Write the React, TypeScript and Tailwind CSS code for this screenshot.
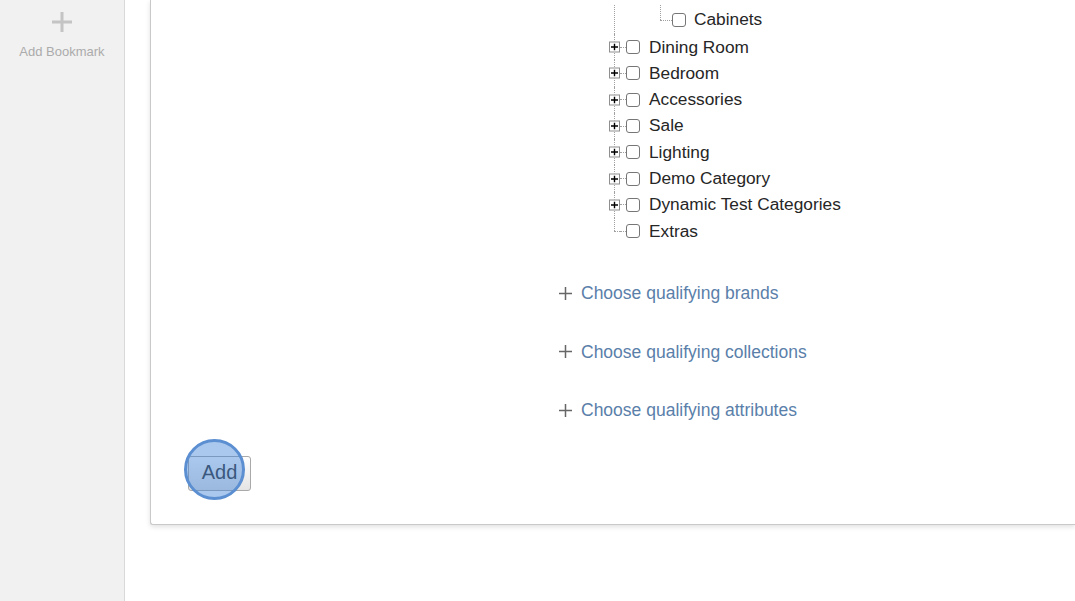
import React from 'react';

type Row = { label: string; expandable: boolean; last?: boolean };

const rows: Row[] = [
  { label: 'Dining Room', expandable: true },
  { label: 'Bedroom', expandable: true },
  { label: 'Accessories', expandable: true },
  { label: 'Sale', expandable: true },
  { label: 'Lighting', expandable: true },
  { label: 'Demo Category', expandable: true },
  { label: 'Dynamic Test Categories', expandable: true },
  { label: 'Extras', expandable: false, last: true },
];

const links = [
  'Choose qualifying brands',
  'Choose qualifying collections',
  'Choose qualifying attributes',
];

function Checkbox() {
  return <span className="w-[14px] h-[14px] shrink-0 rounded-[3px] border border-[#767676] bg-white" />;
}

function Expander() {
  return (
    <span className="absolute left-0 top-1/2 -translate-y-1/2 w-[11px] h-[11px] border border-[#8f8f8f] bg-white flex items-center justify-center">
      <svg width="7" height="7" viewBox="0 0 7 7">
        <path d="M0 3.5h7M3.5 0v7" stroke="#000" strokeWidth="1.4" />
      </svg>
    </span>
  );
}

function TreeRow({ row }: { row: Row }) {
  return (
    <div className="flex items-center h-[26.3px]">
      <div className="relative w-[11px] h-full shrink-0">
        <span
          className={`absolute left-[5px] top-0 border-l border-dotted border-[#a0a0a0] ${
            row.last ? 'h-1/2' : 'h-full'
          }`}
        />
        {row.expandable ? (
          <Expander />
        ) : (
          <span className="absolute left-[5px] right-0 top-1/2 border-t border-dotted border-[#a0a0a0]" />
        )}
      </div>
      <span className="w-[6px] shrink-0 border-t border-dotted border-[#a0a0a0]" />
      <Checkbox />
      <span className="ml-[9px] text-[17.3px] text-[#262626] leading-none">{row.label}</span>
    </div>
  );
}

export default function App() {
  return (
    <div
      className="flex h-screen w-full overflow-hidden bg-white"
      style={{ fontFamily: '"Liberation Sans", Arial, sans-serif' }}
    >
      {/* Sidebar */}
      <aside className="w-[125px] shrink-0 bg-[#f1f1f1] border-r border-[#d9d9d9] flex flex-col items-center pt-[11px]">
        <svg width="22" height="22" viewBox="0 0 22 22">
          <path d="M11 1v20M1 11h20" stroke="#c4c4c4" strokeWidth="3" />
        </svg>
        <span className="mt-[9px] text-[13px] text-[#ababab]">Add Bookmark</span>
      </aside>

      {/* Main */}
      <main className="flex-1 pl-[25px] overflow-hidden">
        <div className="h-[525px] bg-white border-l border-b border-[#c9c9c9] rounded-bl-[3px] shadow-[0_2px_5px_rgba(0,0,0,0.12)]">
          {/* Category tree */}
          <div className="pl-[458px] pt-[5px]">
            <div className="flex items-center h-[29px]">
              <div className="relative w-[11px] h-full shrink-0">
                <span className="absolute left-[5px] top-0 h-full border-l border-dotted border-[#a0a0a0]" />
              </div>
              <span className="w-[35px] shrink-0" />
              <div className="relative w-[17px] h-full shrink-0">
                <span className="absolute left-[5px] top-0 h-1/2 border-l border-dotted border-[#a0a0a0]" />
                <span className="absolute left-[5px] right-0 top-1/2 border-t border-dotted border-[#a0a0a0]" />
              </div>
              <Checkbox />
              <span className="ml-[8px] text-[17.3px] text-[#262626] leading-none">Cabinets</span>
            </div>
            {rows.map((row) => (
              <TreeRow key={row.label} row={row} />
            ))}
          </div>

          {/* Qualifying links */}
          <div className="pl-[408px] mt-[37px] flex flex-col gap-[34.5px]">
            {links.map((link) => (
              <div key={link} className="flex items-center h-[24px]">
                <svg width="13" height="13" viewBox="0 0 13 13" className="shrink-0">
                  <path d="M6.5 0v13M0 6.5h13" stroke="#666" strokeWidth="1.5" />
                </svg>
                <span className="ml-[9px] text-[17.5px] text-[#5a80aa]">{link}</span>
              </div>
            ))}
          </div>

          {/* Add button */}
          <div className="pl-[37px] mt-[34px]">
            <div className="relative inline-block">
              <button className="w-[63px] h-[35px] rounded-[3px] border border-[#a9a9a9] bg-gradient-to-b from-white to-[#e4e4e4] text-[20px] text-[#333] leading-none pb-[3px]">
                Add
              </button>
              <span className="absolute left-[-4px] top-[-17px] w-[61px] h-[61px] rounded-full border-[3px] border-[#5b8fd1] bg-[rgba(66,133,214,0.45)] pointer-events-none" />
            </div>
          </div>
        </div>
      </main>
    </div>
  );
}
